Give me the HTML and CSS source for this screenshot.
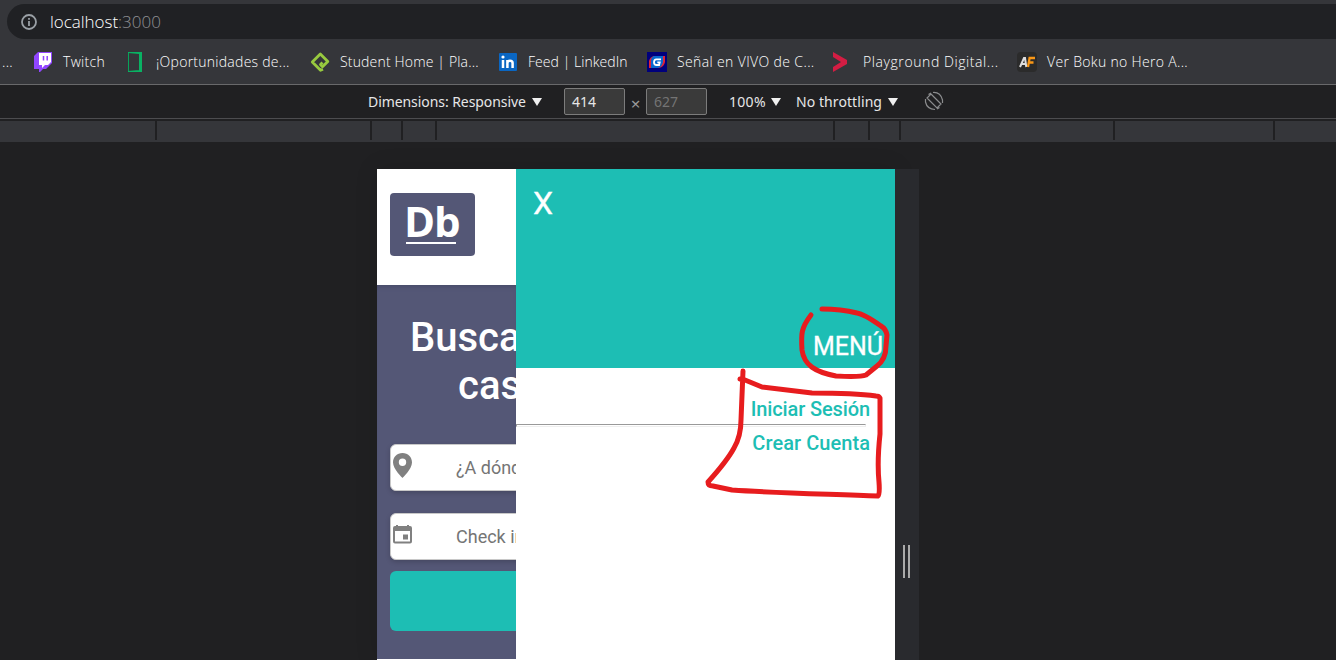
FILE: index.html
```html
<!DOCTYPE html>
<html lang="es">
<head>
<meta charset="utf-8">
<title>localhost:3000</title>
<link rel="stylesheet" href="styles.css">
</head>
<body>
<div class="window">
  <header class="chrome">
    <div class="address">
      <svg class="info" width="18" height="18" viewBox="0 0 18 18"><circle cx="9" cy="9" r="7" fill="none" stroke="#9aa0a6" stroke-width="1.8"/><path d="M9 8v5M9 5v1.800" stroke="#9aa0a6" stroke-width="1.8"/></svg>
      <span class="url">localhost<span class="port">:3000</span></span>
    </div>
    <nav class="bookmarks">
      <span class="mark m-first"><span class="label">...</span></span>
      <span class="mark m-twitch"><svg width="20" height="20" viewBox="0 0 20 20"><path d="M5 0h14v11l-6 6h-3l-3 3H6v-3H1V4z" fill="#9146ff"/><path d="M6 1h12v9l-3 3h-3l-3 3v-3H6z" fill="#fff"/><path d="M10.500 4v4.500M14.200 4v4.500" stroke="#9146ff" stroke-width="1.5"/></svg><span class="label">Twitch</span></span>
      <span class="mark m-jobs"><svg width="20" height="20" viewBox="0 0 20 20"><path d="M2.500.5h13v19h-13z" fill="none" stroke="#07a35a"/><path d="M2 0h14v20h-3V2L2 1zM2 19l11-1v2H2z" fill="#09b263"/></svg><span class="label">¡Oportunidades de...</span></span>
      <span class="mark m-platzi"><svg width="20" height="20" viewBox="0 0 20 20"><path d="M13 17.200L10.500 18.300 2.300 10 10.300 2l7.500 7.500-5.300 5.300-2-2.300 2-2" fill="none" stroke="#98ca3f" stroke-width="2.800" stroke-linejoin="round"/></svg><span class="label">Student Home | Pla...</span></span>
      <span class="mark m-linkedin"><svg width="18" height="18" viewBox="0 0 18 18"><rect width="18" height="18" rx="1" fill="#0a66c2"/><path d="M4 7v8M8.400 7v8M8.400 10c0-3 5.200-3 5.200 0v5" fill="none" stroke="#fff" stroke-width="2.500"/><circle cx="4" cy="4" r="1.600" fill="#fff"/></svg><span class="label">Feed | LinkedIn</span></span>
      <span class="mark m-vivo"><svg width="20" height="20" viewBox="0 0 20 20"><path fill="#00007c" d="M0 0h20v20H0z"/><path d="M7 4h11v6q-1 5-6 6H2V9q1-4 5-5z" fill="#e22236"/><path d="M7 4h9v6q-1 5-5 6H4V9q0-4 3-5z" fill="#0968cf"/><path d="M14 7.400H9.400Q7 7.500 7 10.200 7 13 9.500 13h2.600l.6-2.700h-2.400" fill="none" stroke="#fff" stroke-width="1.800"/></svg><span class="label">Señal en VIVO de C...</span></span>
      <span class="mark m-play"><svg width="20" height="20" viewBox="0 0 20 20"><path d="M3 0l14 8v4L3 20v-5l8-5-8-5z" fill="#d31d43"/></svg><span class="label">Playground Digital...</span></span>
      <span class="mark m-anime"><svg width="20" height="20" viewBox="0 0 20 20"><rect width="20" height="20" rx="4" fill="#2b2b2b"/><path d="M3 15L7 6h1l1.300 9M4.500 12H9" fill="none" stroke="#ddd" stroke-width="2"/><path d="M11 15l1.600-9H18M12 10.500h4.500" fill="none" stroke="#f99716" stroke-width="2.300"/></svg><span class="label">Ver Boku no Hero A...</span></span>
    </nav>
  </header>
  <div class="device-bar">
    <span class="dim">Dimensions: Responsive</span><i class="caret"></i>
    <span class="size size-w">414</span><span class="times">×</span><span class="size size-h">627</span>
    <span class="percent">100%</span><i class="caret"></i>
    <span class="throttle">No throttling</span><i class="caret"></i>
    <svg class="rotate" width="20" height="20" viewBox="0 0 20 20" fill="none" stroke="#8b8c8e" stroke-width="1.2"><path d="M7 3l10 10-4 4L3 7zM9 1.500Q16.500 1 18.500 9v3M1.500 8v3Q3 18 11 18.500M4.500 3.500L7 2M15.500 16.500L13 18"/></svg>
  </div>
  <div class="ruler"><i class="r1"></i><i class="r2"></i><i class="r3"></i><i class="r4"></i><i class="r5"></i><i class="r6"></i><i class="r7"></i><i class="r8"></i><i class="r9"></i></div>
  <main class="stage">
    <div class="viewport">
      <section class="page">
        <div class="brand"><div class="logo"><span>Db</span></div></div>
        <div class="search">
          <h1><span class="line1">Busca</span><span class="line2">cas</span></h1>
          <div class="field"><svg width="24" height="30" viewBox="0 0 24 30"><path d="M11.500 2C6 2 2 6 2 11.500 2 18 11.500 27 11.500 27s9.500-9 9.500-15.500C21 6 17 2 11.500 2zm0 13a3.700 3.700 0 1 1 0-7.400 3.700 3.700 0 0 1 0 7.400z" fill="#808080"/></svg><span>¿A dónde</span></div>
          <div class="field field-date"><svg width="24" height="30" viewBox="0 0 24 30"><path d="M5 5h2v1h9V5h2v1h1q2 0 2 2v13.500q0 2-2 2H4q-2 0-2-2V8q0-2 2-2h1zm-1 6v10.500h15V11zm8 3.500h5v5h-5z" fill="#808080" fill-rule="evenodd"/></svg><span>Check in</span></div>
          <div class="submit"></div>
        </div>
      </section>
      <aside class="drawer">
        <div class="drawer-head"><span class="close">X</span><span class="menu">MENÚ</span></div>
        <div class="links"><span class="login">Iniciar Sesión</span><hr><span class="create">Crear Cuenta</span></div>
      </aside>
    </div>
    <div class="resizer"><i></i><i></i></div>
  </main>
  <svg class="ink" width="1336" height="660" viewBox="0 0 1336 660" fill="none" stroke="#e71c1e" stroke-width="5" stroke-linecap="round" stroke-linejoin="round"><path d="M811 315C801 328 801 334 802 350C804 365 815 372 836 376C854 377 861 377 866 375L877 366Q886 359 886 346L887 335Q886 329 881 326Q864 314 857 313Q841 309 822 309"/><path d="M743 371L741 420Q741 436 734 448Q727 461 708 482Q708 486 713 486L732 490C775 493 829 494 878 496Q880 495 879 482Q877 462 880 434V398Q879 396 876 396C855 393 836 393 812 393L762 387L745 380L740 379"/></svg>
</div>
</body>
</html>
```
FILE: styles.css
```css
* { box-sizing: border-box; }
body { margin: 0; }
.window { position: relative; width: 1336px; height: 660px; overflow: hidden; background: #202022; font-family: "Open Sans", "Noto Sans", sans-serif; color: #f1f1f2; }
.chrome { height: 85px; background: #35363a; border-bottom: 1px solid #69696b; padding-top: 4px; }
.address { height: 35px; margin-left: 7px; background: #202124; border-radius: 18px 0 0 18px; display: flex; align-items: center; padding-left: 13px; }
.url { margin-left: 12px; font-size: 17px; font-weight: 300; letter-spacing: -0.03px; color: #fff; white-space: nowrap; }
.port { color: #909194; }
.bookmarks { height: 45px; display: flex; align-items: center; font-size: 14px; font-weight: 300; color: #fff; }
.mark { display: flex; align-items: center; white-space: nowrap; flex: none; }
.mark svg { flex: none; margin-right: 10px; }
.m-first { width: 33px; padding-left: 2px; letter-spacing: 0.3px; }
.m-twitch { width: 93px; letter-spacing: 0.3px; }
.m-jobs { width: 184px; letter-spacing: 0.26px; }
.m-platzi { width: 189px; letter-spacing: 0.17px; }
.m-linkedin { width: 148px; letter-spacing: 0.05px; }
.m-linkedin svg { margin-right: 11px; }
.m-vivo { width: 183px; letter-spacing: 0.37px; }
.m-play { width: 187px; letter-spacing: 0.58px; }
.m-play svg { margin-right: 13px; }
.m-anime { letter-spacing: 0.33px; }
.device-bar { height: 34px; border-bottom: 1px solid #4c4c4f; display: flex; align-items: center; font-family: "Noto Sans", sans-serif; font-size: 14px; color: #e6e6e7; padding-left: 368px; white-space: nowrap; }
.dim { width: 164px; letter-spacing: -0.07px; }
.caret { border: 5px solid transparent; border-top: 8px solid #f0f0f0; border-bottom: 0; flex: none; }
.size { height: 27px; width: 61px; border: 1px solid #7c7c7c; border-radius: 2px; background: #3a3a3a; padding-left: 7px; line-height: 25px; }
.size-w { margin-left: 22px; }
.size-h { color: #747474; }
.times { width: 21px; text-align: center; color: #999; font-size: 17px; padding-top: 4px; }
.percent { margin-left: 22px; width: 42px; letter-spacing: 0.3px; }
.throttle { margin-left: 15px; width: 92px; letter-spacing: 0.08px; }
.rotate { margin: -2px 0 0 26px; }
.ruler { height: 23px; border-top: 2px solid #202022; background: #35363a; display: flex; }
.ruler i { width: 2px; height: 19px; background: #202022; flex: none; }
.r1 { margin-left: 155px; } .r2 { margin-left: 213px; } .r3 { margin-left: 29px; } .r4 { margin-left: 32px; } .r5 { margin-left: 396px; } .r6 { margin-left: 33px; } .r7 { margin-left: 29px; } .r8 { margin-left: 212px; } .r9 { margin-left: 158px; }
.stage { display: flex; height: 518px; padding: 27px 0 0 377px; }
.viewport { display: flex; width: 518px; background: #fff; font-family: Roboto, sans-serif; box-shadow: 0 0 22px rgba(0,0,0,.12); }
.page { width: 139px; overflow: hidden; background: #fff; }
.brand { height: 116px; padding: 24px 13px; }
.logo { width: 85px; height: 63px; border-radius: 4px; background: #545776; font: 700 42px/56px "Open Sans", sans-serif; letter-spacing: -1.2px; padding-left: 16px; color: #fff; }
.logo span { display: block; height: 51px; width: 50px; border-bottom: 2px solid #fff; text-indent: -2px; }
.search { height: 374px; background: #545776; padding: 29px 0 0 13px; box-shadow: inset 0 4px 5px -3px #454765; }
h1 { margin: 0; font-size: 40px; line-height: 48px; font-weight: 500; color: #fff; white-space: nowrap; }
h1 span { display: block; }
.line1 { padding-left: 20px; }
.line2 { padding-left: 68px; }
.field { height: 47px; width: 180px; margin-top: 34px; background: #fff; border: 1px solid #c8c8c8; border-radius: 6px; box-shadow: 0 2px 5px rgba(0,0,0,.18); color: #757575; font-size: 18px; display: flex; align-items: center; }
.field svg { margin-top: -4px; }
.field span { padding-left: 41px; white-space: nowrap; }
.field-date { margin-top: 22px; }
.submit { height: 60px; width: 180px; margin-top: 11px; border-radius: 6px; background: #1dbeb4; }
.drawer { width: 379px; background: #fff; }
.drawer-head { height: 199px; background: #1dbeb4; display: flex; flex-direction: column; justify-content: space-between; padding: 14px 12px 6px 17px; color: #fff; }
.close { font-size: 32px; line-height: 40px; -webkit-text-stroke: 0.3px #fff; }
.menu { font-size: 25px; line-height: 30px; align-self: flex-end; -webkit-text-stroke: 0.3px #fff; }
.links { padding-top: 29px; display: flex; flex-direction: column; color: #1dbeb4; font-size: 20px; line-height: 24px; font-weight: 500; text-align: right; }
.links span { padding-right: 25px; }
.login { letter-spacing: -0.12px; }
.create { letter-spacing: 0.06px; }
.links hr { width: 350px; margin: 3px 0 4px; height: 3px; border: 1px solid #999; border-color: #999 #eee #eee #999; }
.resizer { width: 24px; background: #292a2e; display: flex; gap: 3px; padding: 376px 0 0 8px; }
.resizer i { width: 2px; height: 33px; background: #aaa; }
.ink { position: absolute; left: 0; top: 0; }
```
